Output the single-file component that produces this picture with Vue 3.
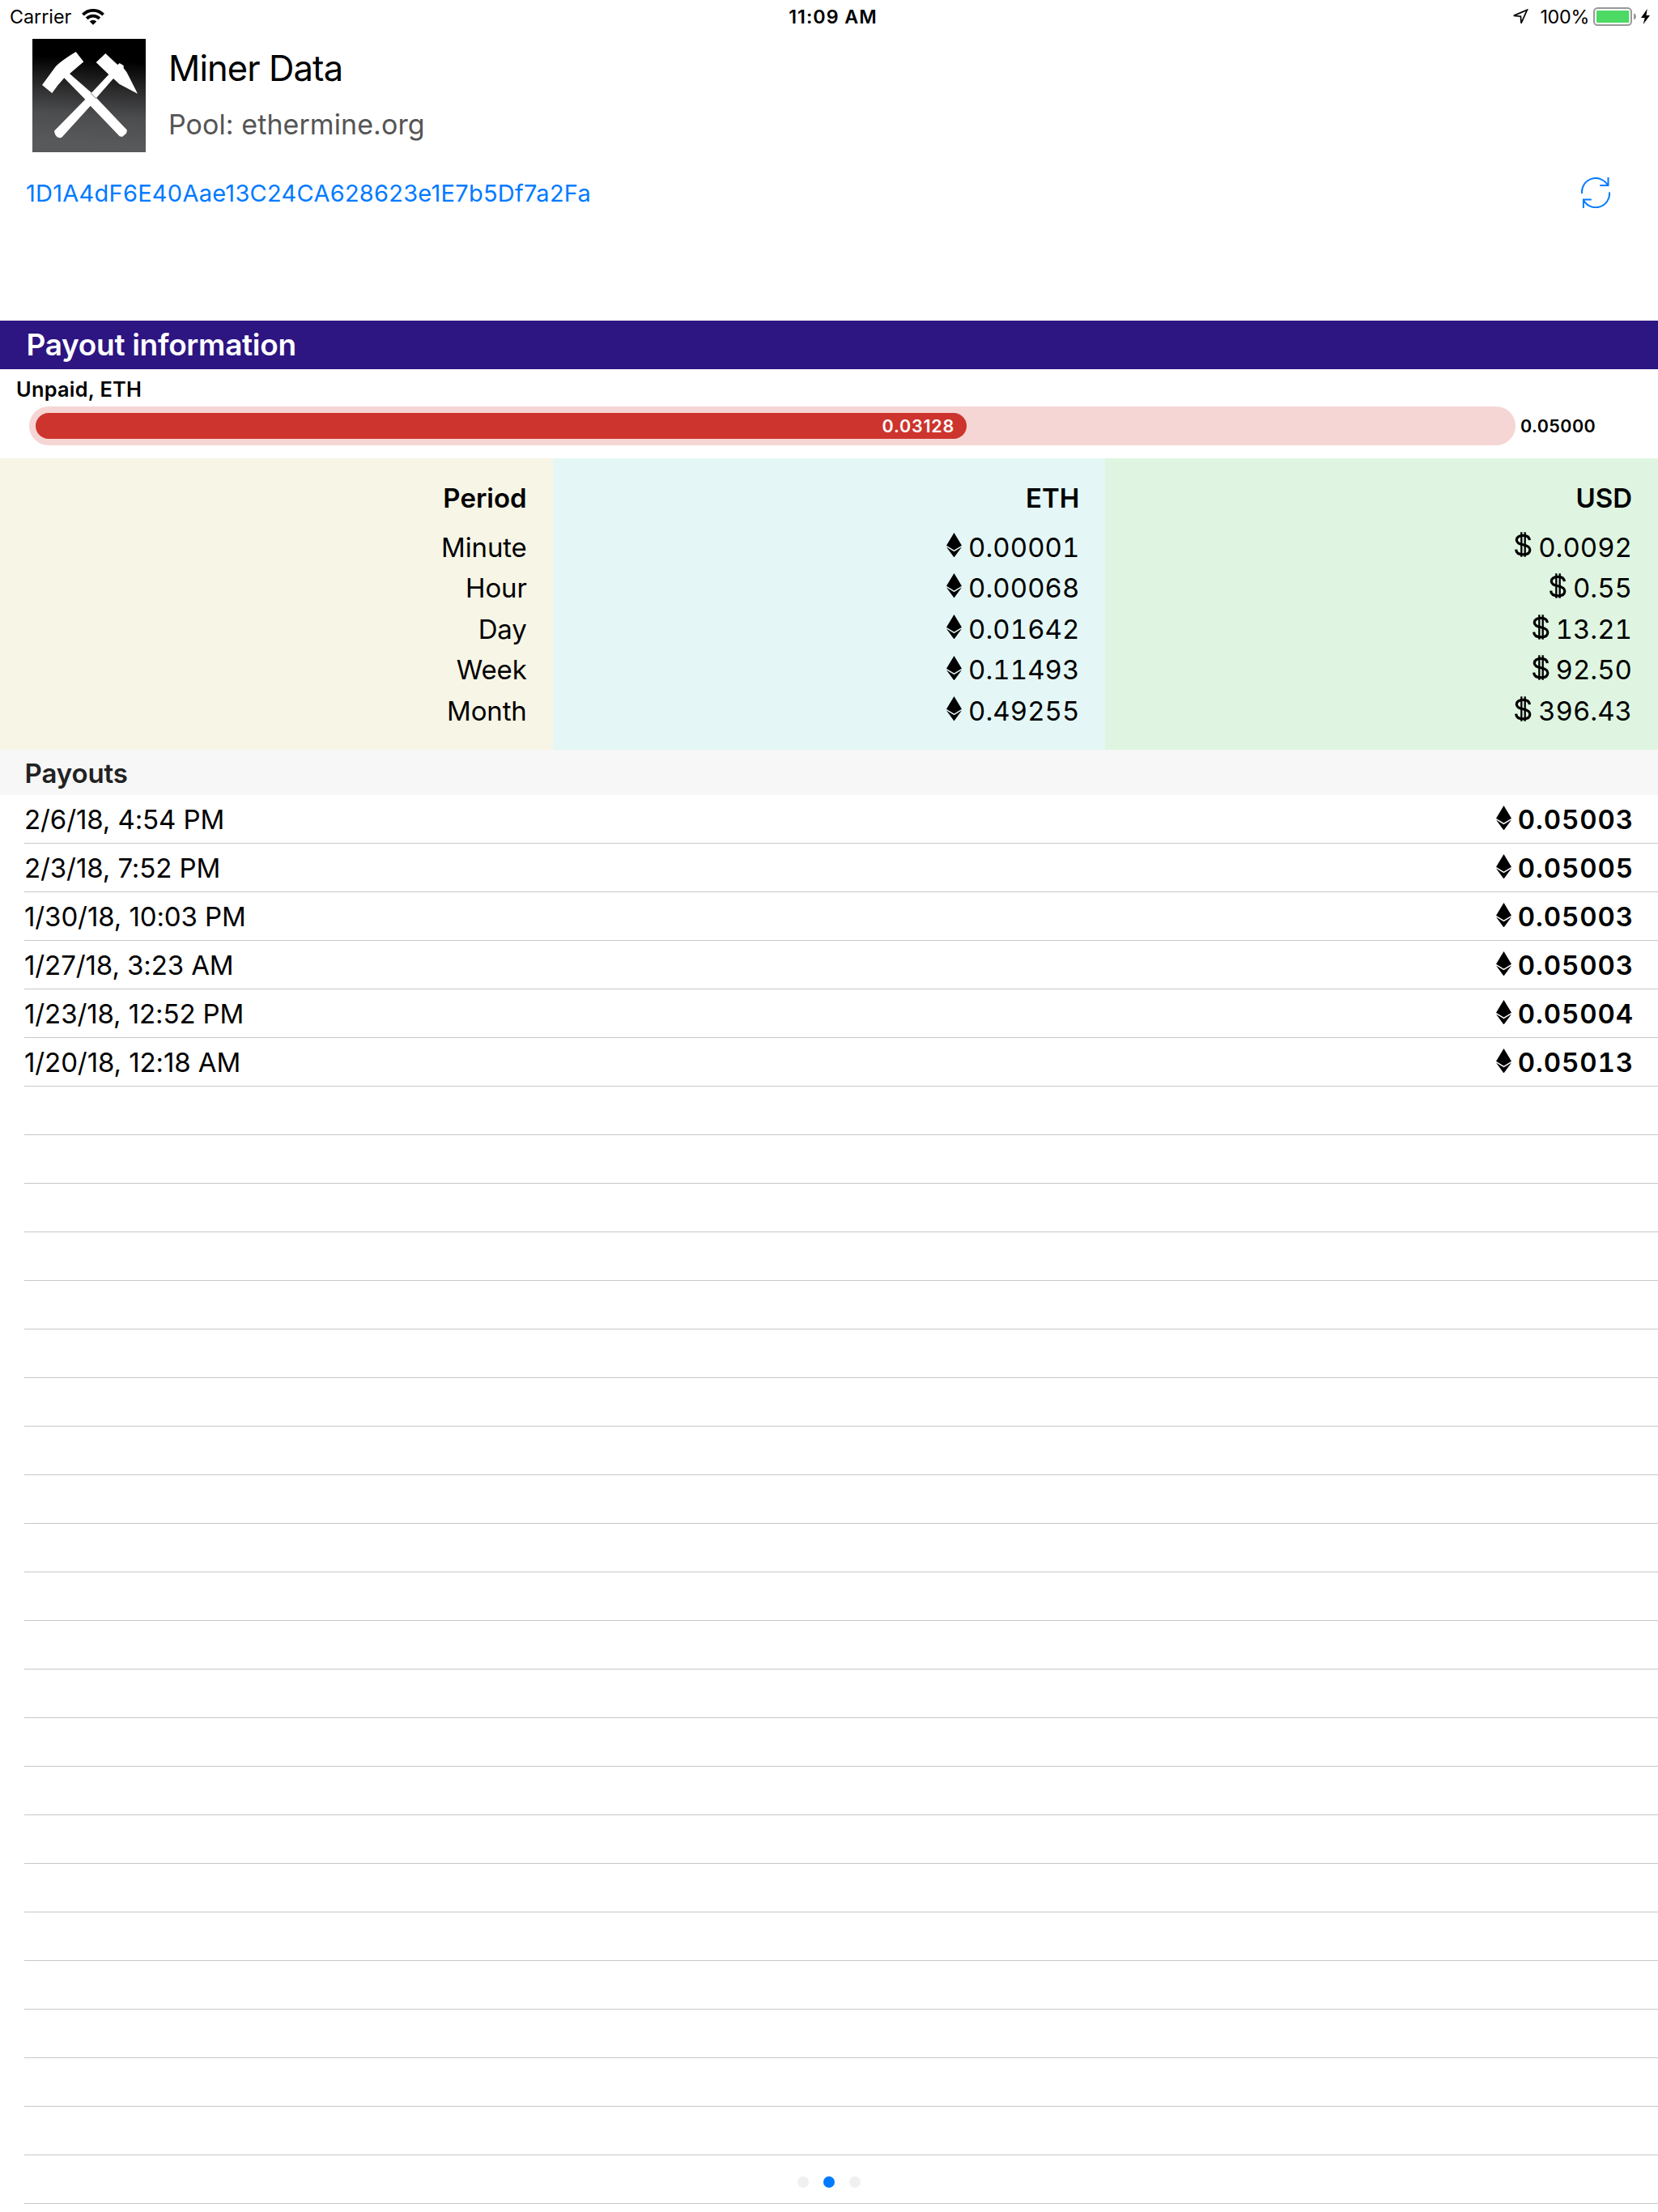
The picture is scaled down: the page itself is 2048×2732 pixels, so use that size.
<template>
  <div class="miner-view">
    <div class="status-bar">
      <div class="status-left">
        <span>Carrier</span>
        <svg class="wifi" viewBox="0 0 28 20">
          <path d="M1.4 7.1A17.8 17.8 0 0 1 26.6 7.1M6.1 11.8A11.2 11.2 0 0 1 21.9 11.8" fill="none" stroke="#000" stroke-width="3.8" />
          <path d="M14 19.7L9.76 15.46A6 6 0 0 1 18.24 15.46Z" />
        </svg>
      </div>
      <div class="status-time">11:09 AM</div>
      <div class="status-right">
        <svg class="location" viewBox="0 0 20 20">
          <path d="M1.8 8.4L18.4 1.2L11 17.6L10.4 9.2Z" fill="none" stroke="#000" stroke-width="1.7" />
        </svg>
        <span class="percent">100%</span>
        <svg class="battery" viewBox="0 0 54 23">
          <rect x="1" y="1" width="46" height="21" rx="4.5" fill="none" stroke="#999" stroke-width="2" />
          <rect x="4" y="4" width="40.3" height="15" rx="1.2" fill="#4cd964" />
          <path d="M50 7.6C54 8.6 54 14.4 50 15.4Z" fill="#999" />
        </svg>
        <svg class="bolt" viewBox="0 0 11 19">
          <path d="M7.7 0L0 11H4.7L2.7 19L11 8H6.5Z" />
        </svg>
      </div>
    </div>

    <header class="page-header">
      <svg class="logo" viewBox="0 0 140 140">
        <path d="M53.7 16L63.3 28.3L46 43L73.5 67L117 112.7L116 116.7L111 121L107.7 120.3L71.7 82.7L36.7 121.3Q35 123 32.7 122Q28 121 27 113.7L65.3 74.7L39.3 48.3Q31 57 24.3 67L12 57L28.3 34.7Q34 28 53.7 16Z" fill="#fff" />
        <path d="M90.3 18L105.3 32L107.7 30L112.7 33V36.3Q117 41 119 46L130 67.7L107.7 56L100 49L78.5 73.5L72.3 67.5L94.3 44L78.7 29Z" fill="#fff" />
        <path d="M72 67L79 74" stroke="#333" stroke-width="0.6" />
      </svg>
      <div class="header-text">
        <h1 class="title">Miner Data</h1>
        <div class="pool">Pool: ethermine.org</div>
      </div>
    </header>

    <div class="address-row">
      <a class="address">{{ address }}</a>
      <svg class="refresh" viewBox="0 0 36 38">
        <path d="M1 20A17.1 17.1 0 0 1 33 10M33.5 0V10H23.3M35 18.3A17.1 17.1 0 0 1 3 28.3M2.9 38V27.6H12.8" fill="none" stroke="#007aff" stroke-width="2" />
      </svg>
    </div>

    <h2 class="banner">Payout information</h2>

    <div class="unpaid-label">Unpaid, ETH</div>
    <div class="unpaid">
      <div class="track">
        <div class="fill" :style="{ width: fillWidth }">{{ unpaid.toFixed(5) }}</div>
      </div>
      <span class="goal">{{ goal.toFixed(5) }}</span>
    </div>

    <div class="earnings">
      <div class="column period">
        <div class="column-title">Period</div>
        <div v-for="e in earnings" :key="e.period" class="cell">{{ e.period }}</div>
      </div>
      <div class="column eth">
        <div class="column-title">ETH</div>
        <div v-for="e in earnings" :key="e.period" class="cell number">
          <svg class="eth-icon" viewBox="0 0 19 30.5">
            <path d="M9.5 0L19 15.7L9.5 21.5L0 15.7ZM0 17.6L9.5 23.3L19 17.6L9.5 30.5Z" />
          </svg>
          <span>{{ e.eth }}</span>
        </div>
      </div>
      <div class="column usd">
        <div class="column-title">USD</div>
        <div v-for="e in earnings" :key="e.period" class="cell number">
          <svg class="usd-icon" viewBox="0 0 21 31">
            <path d="M18.4 10.2C18 6.3 15 4.400 10.400 4.400C5.600 4.400 2.300 6.600 2.300 9.900C2.300 13.300 5.300 14.600 10.400 15.700C15.900 16.900 18.800 18.400 18.800 22C18.800 25.900 15.700 27.900 10.600 27.900C5.400 27.900 1.900 25.800 1.600 21.600" fill="none" stroke="#000" stroke-width="3.2" />
            <path d="M8.300 0.300V30.700M12.700 0.300V30.700" fill="none" stroke="#000" stroke-width="2.3" />
          </svg>
          <span>{{ e.usd }}</span>
        </div>
      </div>
    </div>

    <h3 class="list-header">Payouts</h3>
    <ul class="payouts">
      <li v-for="p in payouts" :key="p.date" class="row">
        <span>{{ p.date }}</span>
        <span class="amount">
          <svg class="eth-icon" viewBox="0 0 19 30.5">
            <path d="M9.5 0L19 15.7L9.5 21.5L0 15.7ZM0 17.6L9.5 23.3L19 17.6L9.5 30.5Z" />
          </svg>
          <span>{{ p.amount }}</span>
        </span>
      </li>
      <li v-for="n in emptyRows" :key="n" class="row"></li>
    </ul>

    <div class="pager">
      <span v-for="n in 3" :key="n" class="dot" :class="{ active: n === page }"></span>
    </div>
  </div>
</template>

<script setup>
import { ref, computed } from 'vue'

const address = ref('1D1A4dF6E40Aae13C24CA628623e1E7b5Df7a2Fa')
const unpaid = ref(0.03128)
const goal = ref(0.05)
const page = ref(2)

const earnings = ref([
  { period: 'Minute', eth: '0.00001', usd: '0.0092' },
  { period: 'Hour', eth: '0.00068', usd: '0.55' },
  { period: 'Day', eth: '0.01642', usd: '13.21' },
  { period: 'Week', eth: '0.11493', usd: '92.50' },
  { period: 'Month', eth: '0.49255', usd: '396.43' }
])

const payouts = ref([
  { date: '2/6/18, 4:54 PM', amount: '0.05003' },
  { date: '2/3/18, 7:52 PM', amount: '0.05005' },
  { date: '1/30/18, 10:03 PM', amount: '0.05003' },
  { date: '1/27/18, 3:23 AM', amount: '0.05003' },
  { date: '1/23/18, 12:52 PM', amount: '0.05004' },
  { date: '1/20/18, 12:18 AM', amount: '0.05013' }
])

// The table keeps drawing separators down to the bottom of the screen
const emptyRows = computed(() => 29 - payouts.value.length)

const fillWidth = computed(() => `calc(${(unpaid.value / goal.value) * 100}% + 1.5px)`)
</script>

<style>
body {
  background: #fff;
}
</style>

<style scoped>
.miner-view {
  position: relative;
  width: 2048px;
  height: 2732px;
  overflow: hidden;
  background: #fff;
  color: #000;
  font-family: Inter, "Liberation Sans", sans-serif;
  font-size: 33px;
}

svg {
  display: block;
  flex: none;
}

h1,
h2,
h3,
ul {
  margin: 0;
  padding: 0;
}

.status-bar {
  display: flex;
  height: 41px;
  padding: 0 2px 0 12px;
  font-size: 23.3px;
  line-height: 41px;
}

.status-left,
.status-right {
  flex: 1 1 0;
  display: flex;
  align-items: center;
}

.status-left {
  gap: 13px;
}

.status-right {
  justify-content: flex-end;
  padding-right: 8px;
  box-sizing: border-box;
}

.status-time {
  font-weight: 600;
  letter-spacing: 0.97px;
}

.wifi {
  width: 28px;
  height: 20px;
}

.location {
  width: 20px;
  height: 20px;
  margin-right: 14px;
}

.percent {
  letter-spacing: -0.29px;
}

.battery {
  width: 54px;
  height: 23px;
  margin: 0 5px;
}

.bolt {
  width: 11px;
  height: 19px;
}

.page-header {
  display: flex;
  gap: 28px;
  padding: 7px 40px 0;
}

.logo {
  width: 140px;
  height: 140px;
  background: linear-gradient(184deg, #000 20%, #2b2b2c 44%, #4c4d4f 66%, #58595b 90%);
}

.title {
  font-size: 43.5px;
  font-weight: 400;
  line-height: 72px;
  letter-spacing: -0.9px;
}

.pool {
  color: #555;
  font-size: 34px;
  line-height: 67px;
  letter-spacing: 0.07px;
}

.address-row {
  display: flex;
  justify-content: space-between;
  align-items: center;
  height: 101px;
  margin-bottom: 107px;
  padding: 0 59px 0 32px;
}

.address {
  color: #007aff;
  font-size: 29px;
  letter-spacing: 0.255px;
}

.refresh {
  width: 36px;
  height: 38px;
  margin-bottom: 1px;
}

.banner {
  height: 60px;
  padding-left: 32.5px;
  background: #2d1582;
  color: #fff;
  font-size: 37px;
  font-weight: 600;
  line-height: 59px;
  letter-spacing: -0.3px;
}

.unpaid-label {
  padding: 4px 20px 0;
  font-size: 25.3px;
  font-weight: 600;
  line-height: 42px;
  letter-spacing: 0.3px;
}

.unpaid {
  display: flex;
  align-items: center;
  gap: 6px;
  height: 48px;
  margin: 0 0 16px 36px;
  font-size: 21.5px;
}

.track {
  width: 1836px;
  height: 48px;
  padding: 8px 0;
  box-sizing: border-box;
  border-radius: 24px;
  background: #f5d6d4;
}

.fill {
  height: 32px;
  margin-left: 8px;
  padding-right: 15px;
  box-sizing: border-box;
  border-radius: 16px;
  background: #cd342d;
  color: #fff;
  font-weight: 600;
  line-height: 32px;
  letter-spacing: 0.8px;
  text-align: right;
}

.goal {
  font-weight: 600;
  letter-spacing: 0.43px;
}

.earnings {
  display: flex;
  height: 360px;
}

.column {
  flex: 1 1 0;
  padding: 24px 32px 0 0;
  text-align: right;
}

.period {
  background: #f7f5e6;
}

.eth {
  background: #e4f7f6;
}

.usd {
  background: #dff5e1;
}

.column-title {
  margin-bottom: 10.7px;
  font-weight: 600;
  line-height: 50px;
}

.cell {
  height: 50.6px;
  line-height: 50.6px;
  letter-spacing: -0.15px;
}

.number {
  display: flex;
  justify-content: flex-end;
  align-items: center;
  gap: 8px;
  font-variant-numeric: tabular-nums;
  letter-spacing: 0;
}

.eth-icon {
  width: 19px;
  height: 30.5px;
}

.usd-icon {
  width: 21px;
  height: 31px;
}

.number svg {
  margin-bottom: 6px;
}

.list-header {
  height: 56px;
  padding-left: 30.5px;
  background: #f7f7f7;
  color: #222;
  font-size: 33px;
  font-weight: 600;
  line-height: 58px;
  letter-spacing: -0.1px;
}

.payouts {
  padding-left: 30px;
  list-style: none;
}

.row {
  display: flex;
  justify-content: space-between;
  align-items: center;
  height: 60px;
  padding-right: 30px;
  box-sizing: border-box;
  border-bottom: 1px solid #c8c7cc;
  line-height: 60px;
  letter-spacing: -0.1px;
}

.amount {
  display: flex;
  align-items: center;
  gap: 8px;
  font-weight: 600;
  font-variant-numeric: tabular-nums;
  letter-spacing: 0.9px;
  line-height: 62px;
}

.amount svg {
  margin-bottom: 3px;
}

.status-time {
  margin-left: 8px;
}

.pager {
  position: absolute;
  left: 0;
  right: 0;
  bottom: 30px;
  display: flex;
  justify-content: center;
  gap: 18px;
}

.dot {
  width: 14px;
  height: 14px;
  border-radius: 50%;
  background: #f0f0f0;
}

.dot.active {
  background: #007aff;
}
</style>
